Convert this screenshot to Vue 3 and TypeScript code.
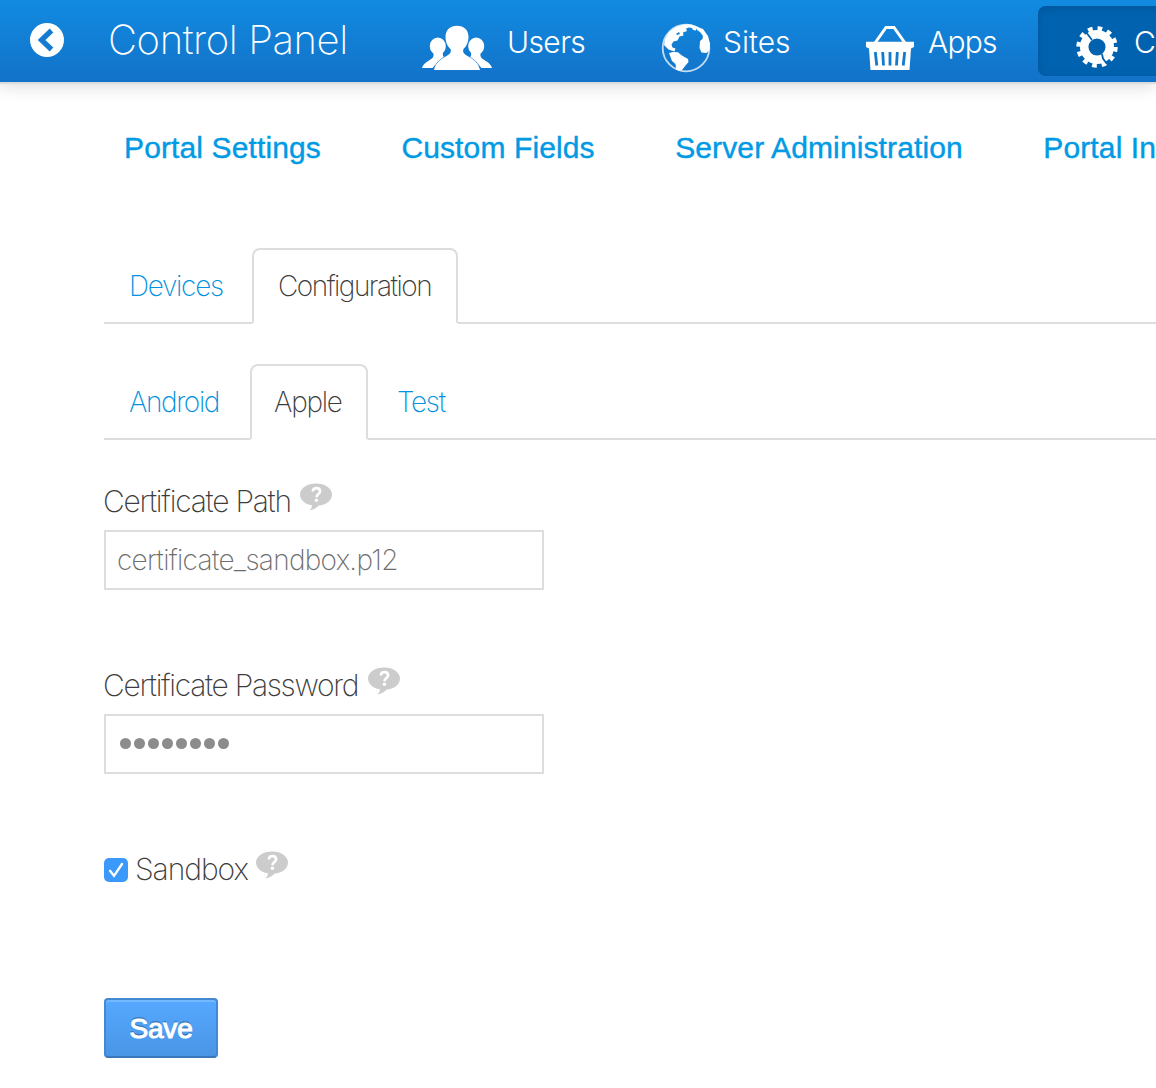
<script setup lang="ts">
import { ref } from 'vue'

const sections = ['Portal Settings', 'Custom Fields', 'Server Administration', 'Portal Instances']
const path = ref('certificate_sandbox.p12')
const passwordLength = 8
const sandbox = ref(true)
</script>

<template>
  <div class="page">
    <header class="bar">
      <a class="back">
        <svg width="34" height="34" viewBox="0 0 34 34">
          <circle cx="17" cy="17" r="17" fill="#fff" />
          <path d="M21.500 7.500 11.500 17l10 9.500" fill="none" stroke="#147bd0" stroke-width="5.200" />
        </svg>
      </a>
      <h1 class="title">Control Panel</h1>
      <nav class="nav">
        <a class="item users">
          <svg width="70" height="46" viewBox="0 0 70 46" fill="#fff">
            <ellipse cx="15.800" cy="21.200" rx="8" ry="8.600" />
            <ellipse cx="54.200" cy="21.200" rx="8" ry="8.600" />
            <path d="M11 27c1.500 4.500 0 6-4 8.500C3 38 .6 40 0 43h10.500c3-4 7.500-7 12.500-10-2-1-2.500-3-2-6z" />
            <path d="M59 27c-1.500 4.500 0 6 4 8.500C67 38 69.400 40 70 43H59.500c-3-4-7.500-7-12.500-10 2-1 2.500-3 2-6z" />
            <path d="M35 .8c7 0 11.500 4.400 11.500 11 0 6-2.500 10-5 12.200-1.200 3 .5 5 4 7C51.500 34 56.500 38 58 45H12c1.500-7 6.500-11 12.500-14 3.500-2 5.200-4 4-7-2.500-2.200-5-6.200-5-12.200C23.500 5.200 28 .8 35 .8z" stroke="#147bd0" stroke-width="1.200" paint-order="stroke" />
          </svg>
          <span>Users</span>
        </a>
        <a class="item sites">
          <svg width="50" height="50" viewBox="0 0 50 50" fill="#fff">
            <circle cx="25" cy="25" r="23.300" fill="none" stroke="#fff" stroke-opacity=".75" stroke-width="1.800" />
            <path d="M3 22 4 16 8 9l7-5 8-2.500 7 0 5 2v4l-3-.5-1-2-3-.5-3 1 1 2.500-4 1.500.5 3-4 1-2 4-4 1-2 3 1 3 3 1-1 3-6-2z" />
            <path d="M15 11l3-2 1 2-3 1z" fill="#1480d5" />
            <path d="M8 30l4-1 5 .2 3.500 3L27 36l.5 3-3 3.500L21 47l-3 .8-3-1.500L14.500 41 11 38z" />
            <path d="M34 3l2 4 3 2 3 4-.5 3-2.500 2-.5 7 2 4.500 5 .5 3-3 .5-6-2-8-5-7z" />
          </svg>
          <span>Sites</span>
        </a>
        <a class="item apps">
          <svg width="48" height="46" viewBox="0 0 48 46" fill="#fff">
            <path d="M9 18 20 2.500h8L39 18" fill="none" stroke="#fff" stroke-width="3" />
            <path d="M0 16.800h48V22l-3 1.500L43.500 45h-39L3 23.500 0 22z" />
            <path d="M9.300 27l1.500 13.500M16.700 27l.8 13.500M24 27v13.500M31.300 27l-.8 13.500M38.700 27l-1.500 13.500" stroke="#137ace" stroke-width="2.800" />
          </svg>
          <span>Apps</span>
        </a>
        <a class="item active">
          <svg width="42" height="42" viewBox="0 0 42 42" fill="none">
            <circle cx="21" cy="21" r="12.800" stroke="#fff" stroke-width="8.500" />
            <circle cx="21" cy="21" r="18" stroke="#fff" stroke-width="5.400" stroke-dasharray="4.600 4.825" />
            <path d="M9 3.500l2.500 4.500 4.500 6M26 28l1 4.500 4 5.500" stroke="#0163b0" stroke-width="1.800" />
          </svg>
          <span>Configuration</span>
        </a>
      </nav>
    </header>

    <nav class="sections">
      <a v-for="s in sections" :key="s">{{ s }}</a>
    </nav>

    <main class="content">
      <ul class="tabs main-tabs">
        <li class="devices">Devices</li>
        <li class="current configuration">Configuration</li>
      </ul>
      <ul class="tabs sub-tabs">
        <li class="android">Android</li>
        <li class="current apple">Apple</li>
        <li class="test">Test</li>
      </ul>

      <form class="form" @submit.prevent>
        <div class="field">
          <label class="path-label">Certificate Path</label>
          <svg class="help" width="32" height="28" viewBox="0 0 32 28">
            <path d="M16 .5c9 0 16 4.800 16 11s-6 10.600-13.500 11.200C16.500 25 13.500 26.500 9.500 27.500c2-2 2.500-3.500 2.300-5.200C5 21.300 0 17 0 11.500c0-6.200 7-11 16-11z" fill="#ccc" />
            <path d="M12.800 8.600c0-2.200 1.300-3.500 3.600-3.500s3.700 1.200 3.700 3.100c0 2.800-3.600 2.800-3.600 6" fill="none" stroke="#fff" stroke-width="2.600" />
            <circle cx="16.400" cy="17.300" r="1.700" fill="#fff" />
          </svg>
        </div>
        <input v-model="path" class="box" type="text" spellcheck="false">

        <div class="field second">
          <label class="password-label">Certificate Password</label>
          <svg class="help" width="32" height="28" viewBox="0 0 32 28">
            <path d="M16 .5c9 0 16 4.800 16 11s-6 10.600-13.500 11.200C16.500 25 13.500 26.500 9.500 27.500c2-2 2.500-3.500 2.300-5.200C5 21.300 0 17 0 11.500c0-6.200 7-11 16-11z" fill="#ccc" />
            <path d="M12.800 8.600c0-2.200 1.300-3.500 3.600-3.500s3.700 1.200 3.700 3.100c0 2.800-3.600 2.800-3.600 6" fill="none" stroke="#fff" stroke-width="2.600" />
            <circle cx="16.400" cy="17.300" r="1.700" fill="#fff" />
          </svg>
        </div>
        <div class="box dots"><i v-for="n in passwordLength" :key="n" /></div>

        <div class="field second">
          <span class="check" role="checkbox" :aria-checked="sandbox" @click="sandbox = !sandbox">
            <svg v-if="sandbox" width="24" height="24" viewBox="0 0 24 24">
              <path d="M6 12.800l4 5L18 6" fill="none" stroke="#fff" stroke-width="2.300" stroke-linecap="round" />
            </svg>
          </span>
          <label class="sandbox-label">Sandbox</label>
          <svg class="help" width="32" height="28" viewBox="0 0 32 28">
            <path d="M16 .5c9 0 16 4.800 16 11s-6 10.600-13.500 11.200C16.500 25 13.500 26.500 9.500 27.500c2-2 2.500-3.500 2.300-5.200C5 21.300 0 17 0 11.500c0-6.200 7-11 16-11z" fill="#ccc" />
            <path d="M12.800 8.600c0-2.200 1.300-3.500 3.600-3.500s3.700 1.200 3.700 3.100c0 2.800-3.600 2.800-3.600 6" fill="none" stroke="#fff" stroke-width="2.600" />
            <circle cx="16.400" cy="17.300" r="1.700" fill="#fff" />
          </svg>
        </div>

        <button class="save" type="submit">Save</button>
      </form>
    </main>
  </div>
</template>

<style>
body {
  background: #fff;
}
</style>

<style scoped>
.page {
  width: 100%;
  height: 1088px;
  overflow: hidden;
  font-family: Inter, "Liberation Sans", sans-serif;
  font-weight: 200;
  color: #3c3c3c;
}

.bar {
  display: flex;
  height: 82px;
  background: linear-gradient(#118be1, #1272c8);
  box-shadow: 0 2px 0 #dcdcdc, 0 4px 16px rgba(0, 0, 0, 0.15);
  color: #fff;
}

.back {
  flex: none;
  width: 78px;
  padding: 23px 0 0 30px;
}

.title {
  flex: none;
  width: 314px;
  margin: 0;
  font-size: 40px;
  font-weight: 200;
  line-height: 79px;
  letter-spacing: -0.4px;
  white-space: nowrap;
}

.nav {
  display: flex;
  flex: none;
}

.item {
  display: flex;
  flex: none;
  box-sizing: border-box;
  font-size: 30px;
  font-weight: 300;
  line-height: 84px;
  white-space: nowrap;
}

.item svg {
  flex: none;
}

.users {
  width: 239px;
  letter-spacing: -0.6px;
}

.users svg {
  margin: 25px 15px 0 0;
}

.sites {
  width: 205px;
}

.sites svg {
  margin: 23px 12px 0 0;
}

.apps {
  width: 172px;
  letter-spacing: -0.75px;
}

.apps svg {
  margin: 25px 14px 0 0;
}

.active {
  width: 330px;
  height: 70px;
  margin-top: 6px;
  padding-left: 38px;
  border-radius: 8px;
  background: #0163b0;
  box-shadow: inset 0 2px 10px rgba(0, 40, 90, 0.25);
  line-height: 72px;
}

.active svg {
  margin: 20px 16px 0 0;
}

.sections {
  display: flex;
  gap: 80.500px;
  padding: 48px 0 0 124px;
  font: 400 30px/36px "Liberation Sans", Arial, sans-serif;
  letter-spacing: 0.12px;
  color: #009ae5;
  -webkit-text-stroke: 0.4px #009ae5;
  white-space: nowrap;
}

.content {
  padding: 82px 0 0 104px;
}

.tabs {
  display: flex;
  height: 76px;
  margin: 0;
  padding: 0;
  box-sizing: border-box;
  border-bottom: 2px solid #ddd;
  list-style: none;
  font-size: 28px;
  line-height: 76px;
  color: #0092e0;
  white-space: nowrap;
}

.tabs li {
  box-sizing: border-box;
  padding-left: 24px;
}

.tabs .current {
  height: 76px;
  border: 2px solid #ddd;
  border-bottom-color: #fff;
  border-radius: 8px 8px 0 0;
  background: #fff;
  line-height: 72px;
  color: #3c3c3c;
}

.sub-tabs {
  margin-top: 40px;
}

.tabs .devices {
  width: 148px;
  padding-left: 25px;
  letter-spacing: -1.3px;
}

.configuration {
  width: 206px;
  letter-spacing: -1.5px;
}

.tabs .android {
  width: 146px;
  padding-left: 25px;
  letter-spacing: -1.4px;
}

.tabs .apple {
  width: 118px;
  padding-left: 22px;
  letter-spacing: -1.25px;
}

.test {
  margin-left: 5px;
  letter-spacing: -1.3px;
}

.form {
  padding-top: 42px;
}

.field {
  display: flex;
  height: 48px;
  font-size: 30px;
  line-height: 38px;
  white-space: nowrap;
}

.second {
  margin-top: 76px;
}

.path-label {
  width: 197px;
  margin-left: -1px;
  letter-spacing: -1.24px;
}

.password-label {
  width: 265px;
  margin-left: -1px;
  letter-spacing: -1.3px;
}

.sandbox-label {
  width: 121px;
  letter-spacing: -1.05px;
}

.help {
  flex: none;
  margin-top: 1px;
}

.box {
  display: flex;
  align-items: center;
  width: 440px;
  height: 60px;
  margin: 0;
  padding: 0 0 0 11px;
  box-sizing: border-box;
  border: 2px solid #ddd;
  border-radius: 0;
  outline: 0;
  background: #fff;
  font: 200 28px/56px Inter, "Liberation Sans", sans-serif;
  letter-spacing: -0.71px;
  color: #6e6e6e;
}

.dots {
  gap: 3px;
  padding-left: 13.500px;
}

.dots i {
  width: 11px;
  height: 11px;
  margin-bottom: 1px;
  border-radius: 50%;
  background: #8c8c8c;
}

.check {
  width: 24px;
  height: 24px;
  margin: 8px 7px 0 0;
  border-radius: 5px;
  background: #3b99fc;
}

.check svg {
  display: block;
}

.save {
  display: block;
  width: 114px;
  height: 60px;
  margin-top: 100px;
  padding: 2px 0 0;
  border: 2px solid #4489d0;
  border-bottom-color: #3a78ba;
  border-radius: 4px;
  background: linear-gradient(#55a9ff, #4a95e6);
  box-shadow: inset 0 2px 0 #74b8ff;
  font: 400 28px/54px "Liberation Sans", Arial, sans-serif;
  letter-spacing: -0.2px;
  -webkit-text-stroke: 1px #fff;
  text-shadow: 0 -2px 0 rgba(0, 0, 0, 0.25);
  color: #fff;
}
</style>
